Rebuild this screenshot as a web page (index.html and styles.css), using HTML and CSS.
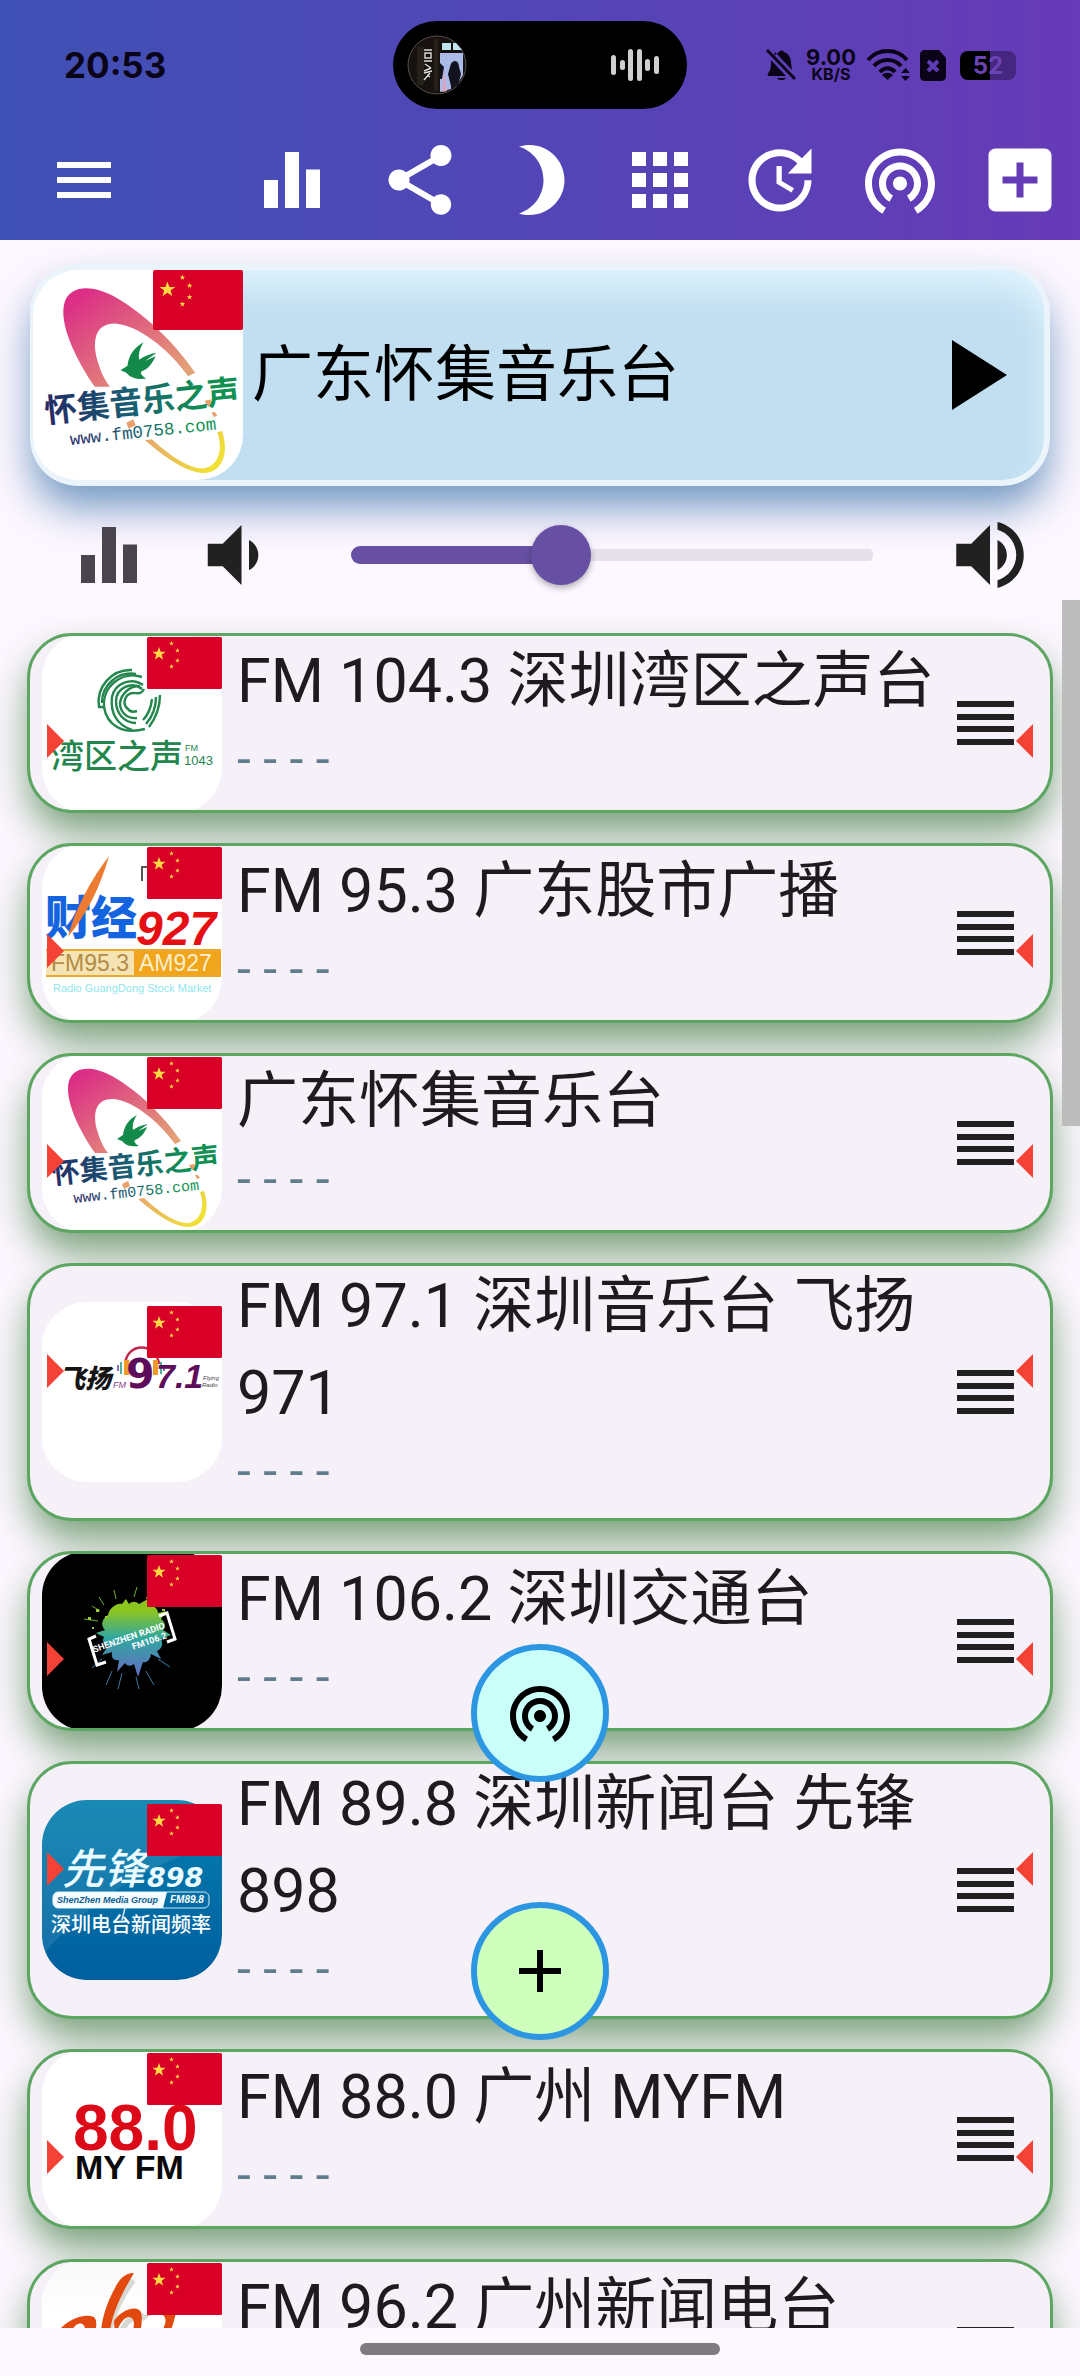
FILE: index.html
```html
<!DOCTYPE html>
<html lang="zh-CN">
<head>
    <meta charset="UTF-8">
    <meta name="viewport" content="width=device-width, initial-scale=1.0">
    <title>广东怀集音乐台</title>
    <link rel="stylesheet" href="styles.css">
</head>
<body>
    <!-- Shared icons and gradients -->
    <svg class="sprite" aria-hidden="true">
        <defs>
            <linearGradient id="pinkFade" x1="0" y1="0" x2="1" y2="1">
                <stop offset="0.1" stop-color="#dc2e86"/>
                <stop offset="0.9" stop-color="#e3a376"/>
            </linearGradient>
            <linearGradient id="yellowFade" x1="0" y1="0" x2="1" y2="0.4">
                <stop offset="0" stop-color="#e5a471"/>
                <stop offset="1" stop-color="#f0df35"/>
            </linearGradient>
            <linearGradient id="navyGreen" x1="0" y1="0" x2="1" y2="0">
                <stop offset="0" stop-color="#232a66"/>
                <stop offset="0.45" stop-color="#185f74"/>
                <stop offset="0.8" stop-color="#119054"/>
            </linearGradient>
            <linearGradient id="splat" x1="0" y1="0" x2="0" y2="1">
                <stop offset="0.15" stop-color="#8cc520"/>
                <stop offset="0.5" stop-color="#30a7a0"/>
                <stop offset="0.9" stop-color="#5b76bd"/>
            </linearGradient>
            <linearGradient id="seaBlue" x1="0" y1="0" x2="0" y2="1">
                <stop offset="0" stop-color="#047fae"/>
                <stop offset="1" stop-color="#005f9f"/>
            </linearGradient>
            <linearGradient id="paper" x1="0" y1="0" x2="0" y2="1">
                <stop offset="0" stop-color="#f8f8f8"/>
                <stop offset="0.3" stop-color="#ffffff"/>
            </linearGradient>
        </defs>
        <symbol id="bars" viewBox="0 0 24 24"><path d="M10 20h4V4h-4v16zm-6 0h4v-8H4v8zM16 9v11h4V9h-4z"/></symbol>
        <symbol id="tether" viewBox="0 0 24 24"><path d="M12 11c-1.1 0-2 .9-2 2s.9 2 2 2 2-.9 2-2-.9-2-2-2zm6 2c0-3.31-2.69-6-6-6s-6 2.69-6 6c0 2.22 1.21 4.15 3 5.19l1-1.74c-1.19-.7-2-1.97-2-3.45 0-2.21 1.79-4 4-4s4 1.79 4 4c0 1.48-.81 2.75-2 3.45l1 1.74c1.79-1.04 3-2.97 3-5.19zM12 3C6.48 3 2 7.48 2 13c0 3.7 2.01 6.92 4.99 8.65l1-1.73C5.61 18.53 4 15.96 4 13c0-4.42 3.58-8 8-8s8 3.58 8 8c0 2.96-1.61 5.53-4 6.92l1 1.73c2.99-1.73 5-4.95 5-8.65 0-5.52-4.48-10-10-10z"/></symbol>
        <symbol id="handle" viewBox="0 0 57 44"><path d="M0 0h57v6H0zM0 13h57v6H0zM0 25h57v6H0zM0 38h57v6H0z"/></symbol>
        <symbol id="star" viewBox="-10 -10 20 20"><path d="M0-10L2.4-3.2 9.5-3.1 3.8 1.2 5.9 8.1 0 4-5.9 8.1-3.8 1.2-9.5-3.1-2.4-3.2z"/></symbol>
        <symbol id="flag" viewBox="0 0 75 52" preserveAspectRatio="none">
            <rect width="75" height="52" rx="1.5" fill="#d80027"/>
            <g fill="#ffda44">
                <use href="#star" x="5" y="10" width="14" height="14"/>
                <use href="#star" x="22" y="4" width="5" height="5"/>
                <use href="#star" x="28" y="11" width="5" height="5"/>
                <use href="#star" x="28" y="21" width="5" height="5"/>
                <use href="#star" x="22" y="27" width="5" height="5"/>
            </g>
        </symbol>
        <symbol id="swallow" viewBox="0 0 180 180">
            <path fill="url(#pinkFade)" d="M53 100C36 76 22 45 27 28C32 12 52 13 70 23C95 37 121 62 139 88L133 91C115 66 90 48 72 46C55 45 50 58 55 77C58 87 61 94 66 100Z"/>
            <path fill="url(#yellowFade)" d="M96 146C112 160 132 174 146 174C161 174 169 159 162 138L158 139C164 156 157 168 147 170C134 171 116 158 102 145Z"/>
            <path fill="#e9a06b" d="M80 131l6-3 2 5-6 3zM147 112l5-1 2 5-4 1zM153 122l3 0 2 3-3 1z"/>
            <path fill="#138a4a" d="M95 62C87 66 82 73 81 82L75 86L80 88C84 93 91 94 97 93C92 90 92 88 93 87C99 85 103 79 105 74L96 78L106 71C100 72 95 74 91 77C90 72 92 66 95 62Z"/>
        </symbol>
    </svg>

    <header class="app-bar">
        <div class="status-bar">
            <time class="clock">20:53</time>
            <div class="island">
                <svg class="album" viewBox="0 0 60 60" aria-hidden="true">
                    <circle cx="30" cy="30" r="29" fill="#17120f" stroke="#55504c"/>
                    <path fill="#26201b" d="M10 12h7v38h-7zM27 4h4v52h-4z"/>
                    <path fill="#bfe3ee" d="M35 8h9v7h-9zM46 8h3l6 7h-9z"/>
                    <path fill="#a9bbe6" d="M33 18h23v22l-6 10V40H44v14l-11 3z"/>
                    <path fill="#d9a7c4" d="M37 34l3 22-5 1z"/>
                    <path fill="#13131f" d="M43 32c1-8 9-8 9 0l2 7-3 12h-7l-3-12zM33 28l4 4-2 12h-2z"/>
                    <path fill="none" stroke="#ddd" stroke-width="1.4" d="M17 15h8M18 18h6v5h-6zM17 26h8M18 29l6 4M24 33l-7 3M17 38l8-2M23 38l-6 7M20 40l3 2"/>
                </svg>
                <svg class="wave" viewBox="0 0 48 32" aria-hidden="true">
                    <g fill="#cfcfcf">
                        <rect x="0" y="6" width="5" height="20" rx="2.5"/>
                        <rect x="9" y="11" width="5" height="10" rx="2.5"/>
                        <rect x="17" y="0" width="5" height="32" rx="2.5"/>
                        <rect x="26" y="0" width="5" height="32" rx="2.5"/>
                        <rect x="34" y="10" width="5" height="12" rx="2.5"/>
                        <rect x="43" y="7" width="5" height="18" rx="2.5"/>
                    </g>
                </svg>
            </div>
            <div class="indicators">
                <svg width="30" height="32" viewBox="0 0 30 32" aria-hidden="true">
                    <path d="M8 7C10 5 12 4 13 3C14 1 17 1 18 3C23 5 25 9 25 14L26 21L9 3zM5 11L20 27H2C1 26 2 24 3 23C5 20 5 16 5 11zM11 29h9c-2 3-7 3-9 0z"/>
                    <path d="M1 1L29 30" stroke="#0b0419" stroke-width="3" fill="none"/>
                </svg>
                <div class="speed">
                    <span class="speed-value">9.00</span>
                    <span class="speed-unit">KB/S</span>
                </div>
                <svg width="44" height="32" viewBox="0 0 44 32" aria-hidden="true">
                    <path fill="none" stroke="#0b0419" stroke-width="4" d="M2 11C12-1 31-1 41 11M8 17C15 9 28 9 35 17M14 23C18 18 25 18 29 23"/>
                    <path d="M16 26C19 23 24 23 27 26L21.5 31zM35 24l4.500-5 4.500 5zM35 27l4.500 5 4.500-5z"/>
                </svg>
                <svg width="26" height="32" viewBox="0 0 26 32" aria-hidden="true">
                    <path d="M5 1h14l7 8v18c0 3-2 5-5 5H5c-3 0-5-2-5-5V6c0-3 2-5 5-5z"/>
                    <path d="M8 12l10 10M18 12L8 22" stroke="#5f3bb5" stroke-width="4" fill="none"/>
                </svg>
                <div class="battery">52</div>
            </div>
        </div>
        <nav class="toolbar">
            <button class="tool tool-menu" aria-label="菜单"><svg class="icon-md" viewBox="0 0 24 24"><path d="M3 18h18v-2H3v2zm0-5h18v-2H3v2zm0-7v2h18V6H3z"/></svg></button>
            <button class="tool tool-first" aria-label="均衡器"><svg class="icon-lg"><use href="#bars"/></svg></button>
            <button class="tool" aria-label="分享"><svg class="icon-lg" viewBox="0 0 24 24"><path d="M18 16.080c-.76 0-1.440.3-1.960.770L8.910 12.700c.05-.230.090-.460.090-.700s-.040-.470-.090-.700l7.050-4.110c.54.5 1.250.81 2.040.81 1.660 0 3-1.340 3-3s-1.340-3-3-3-3 1.340-3 3c0 .24.040.47.090.7L8.040 9.810C7.500 9.310 6.790 9 6 9c-1.660 0-3 1.340-3 3s1.340 3 3 3c.79 0 1.500-.31 2.040-.81l7.120 4.160c-.05.21-.080.43-.080.65 0 1.610 1.310 2.920 2.920 2.920s2.920-1.310 2.920-2.920-1.310-2.920-2.920-2.920z"/></svg></button>
            <button class="tool" aria-label="夜间模式"><svg class="icon-lg" viewBox="0 0 24 24"><path d="M9 2c-1.050 0-2.050.16-3 .46 4.060 1.270 7 5.060 7 9.540 0 4.480-2.940 8.270-7 9.540.95.3 1.950.46 3 .46 5.520 0 10-4.480 10-10S14.520 2 9 2z"/></svg></button>
            <button class="tool" aria-label="网格"><svg class="icon-lg" viewBox="0 0 24 24"><path d="M4 8h4V4H4v4zm6 12h4v-4h-4v4zm-6 0h4v-4H4v4zm0-6h4v-4H4v4zm6 0h4v-4h-4v4zm6-10v4h4V4h-4zm-6 4h4V4h-4v4zm6 6h4v-4h-4v4zm0 6h4v-4h-4v4z"/></svg></button>
            <button class="tool" aria-label="定时"><svg class="icon-lg" viewBox="0 0 24 24"><path d="M21 10.120h-6.780l2.740-2.820c-2.730-2.700-7.150-2.800-9.880-.1-2.730 2.710-2.730 7.080 0 9.790s7.150 2.710 9.880 0C18.320 15.650 19 14.080 19 12.100h2c0 1.980-.88 4.550-2.640 6.290-3.510 3.480-9.210 3.480-12.720 0-3.500-3.470-3.530-9.110-.02-12.580s9.140-3.470 12.650 0L21 3v7.120zM12.500 8v4.250l3.500 2.080-.72 1.210L11 13V8h1.500z"/></svg></button>
            <button class="tool" aria-label="电台"><svg class="icon-lg"><use href="#tether"/></svg></button>
            <button class="tool" aria-label="添加"><svg class="icon-lg" viewBox="0 0 24 24"><path d="M19 3H5c-1.110 0-2 .9-2 2v14c0 1.100.89 2 2 2h14c1.100 0 2-.9 2-2V5c0-1.100-.9-2-2-2zm-2 10h-4v4h-2v-4H7v-2h4V7h2v4h4v2z"/></svg></button>
        </nav>
    </header>

    <!-- Now playing -->
    <section class="player">
        <div class="now-playing">
            <div class="logo logo-large">
                <svg class="logo-art" viewBox="0 0 180 180">
                    <use href="#swallow"/>
                    <g fill="url(#navyGreen)" transform="rotate(-6 11 131)">
                        <text class="logo-cjk" x="11" y="131" font-size="28">怀集音乐之声</text>
                        <text class="logo-mono" x="30" y="152" font-size="15">www.fm0758.com</text>
                    </g>
                </svg>
                <svg class="flag"><use href="#flag"/></svg>
            </div>
            <h1 class="now-title">广东怀集音乐台</h1>
            <button class="play" aria-label="播放"><svg viewBox="0 0 24 24"><path d="M8 5v14l11-7z"/></svg></button>
        </div>
        <div class="volume">
            <button class="eq" aria-label="均衡器"><svg class="icon-lg"><use href="#bars"/></svg></button>
            <button class="quieter" aria-label="减小音量"><svg class="icon-xl" viewBox="0 0 24 24"><path d="M18.500 12c0-1.770-1.020-3.290-2.500-4.030v8.050c1.480-.73 2.500-2.250 2.500-4.020zM5 9v6h4l5 5V4L9 9H5z"/></svg></button>
            <input class="slider" type="range" min="0" max="100" value="39" aria-label="音量">
            <button class="louder" aria-label="增大音量"><svg class="icon-xl" viewBox="0 0 24 24"><path d="M3 9v6h4l5 5V4L7 9H3zm13.500 3c0-1.770-1.020-3.290-2.500-4.030v8.050c1.480-.73 2.500-2.250 2.500-4.020zM14 3.230v2.060c2.890.86 5 3.540 5 6.710s-2.110 5.850-5 6.710v2.060c4.010-.91 7-4.490 7-8.770s-2.990-7.860-7-8.770z"/></svg></button>
        </div>
    </section>

    <main class="stations">
        <ul class="station-list">
            <li class="station">
                <div class="logo">
                    <svg class="logo-art" viewBox="0 0 180 180">
                        <g fill="none" stroke="#23874d" stroke-width="2.4">
                            <path d="M90 37A32 32 0 0 0 57 74L62 74A29 29 0 0 1 100 44"/>
                            <path d="M94 41A29 29 0 0 0 60 70"/>
                            <path d="M101 52A20 20 0 0 0 70 64C68 82 76 92 90 97"/>
                            <path d="M100 56A16 16 0 0 0 74 68C74 80 82 90 94 90"/>
                            <path d="M102 56C99 62 96 60 92 60A9 9 0 0 0 86 76C88 79 92 79 95 78"/>
                            <path d="M98 53A20 20 0 0 0 78 70C78 80 86 86 95 85"/>
                            <path d="M62 74C65 92 80 102 103 96"/>
                            <path d="M110 66C109 75 106 82 101 87M114 64C114 75 110 84 104 91M118 62C118 76 113 86 107 94"/>
                        </g>
                        <g fill="#23874d">
                            <text class="logo-cjk logo-light" x="9" y="135" font-size="33">湾区之声</text>
                            <text class="logo-latin" x="143" y="118" font-size="9">FM</text>
                            <text class="logo-latin" x="142" y="132" font-size="13">1043</text>
                        </g>
                    </svg>
                    <svg class="flag"><use href="#flag"/></svg>
                </div>
                <div class="station-text">
                    <h2>FM 104.3 深圳湾区之声台</h2>
                    <p>- - - -</p>
                </div>
                <button class="drag" aria-label="排序"><svg><use href="#handle"/></svg></button>
            </li>
            <li class="station">
                <div class="logo">
                    <svg class="logo-art" viewBox="0 0 180 180">
                        <path fill="none" stroke="#555" stroke-width="2" d="M100 38V24h6"/>
                        <text class="logo-cjk logo-heavy" x="3" y="91" font-size="46" fill="#1464e0">财经</text>
                        <text class="logo-latin logo-bold logo-oblique" x="94" y="102" font-size="48" fill="#e60f14">927</text>
                        <path fill="#ee7b32" d="M67 13C58 45 44 72 26 94C33 66 48 38 67 13Z"/>
                        <path fill="#f5e3b4" d="M4 106h89v28H4z"/>
                        <path fill="#f0a51c" d="M92 106h87v28H92z"/>
                        <path fill="none" stroke="#eda92c" stroke-width="2" d="M4 107h175M4 133h175"/>
                        <text class="logo-latin" x="9" y="128" font-size="23" fill="#b28c45">FM95.3</text>
                        <text class="logo-latin" x="97" y="128" font-size="23" fill="#fbeecb">AM927</text>
                        <text class="logo-latin" x="11" y="149" font-size="11" fill="#8fe6ee">Radio GuangDong Stock Market</text>
                    </svg>
                    <svg class="flag"><use href="#flag"/></svg>
                </div>
                <div class="station-text">
                    <h2>FM 95.3 广东股市广播</h2>
                    <p>- - - -</p>
                </div>
                <button class="drag" aria-label="排序"><svg><use href="#handle"/></svg></button>
            </li>
            <li class="station">
                <div class="logo">
                    <svg class="logo-art" viewBox="0 0 180 180">
                        <use href="#swallow"/>
                        <g fill="url(#navyGreen)" transform="rotate(-6 11 131)">
                            <text class="logo-cjk" x="11" y="131" font-size="28">怀集音乐之声</text>
                            <text class="logo-mono" x="30" y="152" font-size="15">www.fm0758.com</text>
                        </g>
                    </svg>
                    <svg class="flag"><use href="#flag"/></svg>
                </div>
                <div class="station-text">
                    <h2>广东怀集音乐台</h2>
                    <p>- - - -</p>
                </div>
                <button class="drag" aria-label="排序"><svg><use href="#handle"/></svg></button>
            </li>
            <li class="station">
                <div class="logo">
                    <svg class="logo-art" viewBox="0 0 180 180">
                        <text class="logo-cjk logo-heavy logo-oblique" x="17" y="86" font-size="26" fill="#151515">飞扬</text>
                        <path fill="none" stroke="#c22750" stroke-width="2.5" d="M83 62C85 40 114 40 117 62"/>
                        <path fill="#f09a2c" d="M82 58h5v15h-5zM111 58h5v15h-5z"/>
                        <path fill="#4fae9c" d="M78 60h2v12h-2zM118 60h2v12h-2z"/>
                        <path fill="#8b6fc0" d="M75 63h2v6h-2zM121 63h2v6h-2z"/>
                        <text class="logo-latin logo-oblique" x="71" y="86" font-size="9" fill="#8e3b8a">FM</text>
                        <text class="logo-dejavu" x="84" y="86" font-size="41" fill="#5e0d5a">9</text>
                        <text class="logo-latin logo-bold logo-oblique" x="114" y="86" font-size="34" fill="#5e0d5a">7.1</text>
                        <text class="logo-latin logo-oblique" x="161" y="78" font-size="6" fill="#444">Flying</text>
                        <text class="logo-latin logo-oblique" x="160" y="85" font-size="6" fill="#444">Radio</text>
                    </svg>
                    <svg class="flag"><use href="#flag"/></svg>
                </div>
                <div class="station-text">
                    <h2>FM 97.1 深圳音乐台 飞扬 971</h2>
                    <p>- - - -</p>
                </div>
                <button class="drag" aria-label="排序"><svg><use href="#handle"/></svg></button>
            </li>
            <li class="station">
                <div class="logo">
                    <svg class="logo-art logo-black" viewBox="0 0 180 180">
                        <path fill="url(#splat)" d="M66 64C68 56 75 52 80 53L84 48L87 53C90 50 94 50 97 53L106 48L105 55C112 54 116 58 116 62L124 60L119 68C124 72 124 76 121 79L129 84L119 88C122 94 119 98 115 100L119 108L109 103C108 110 104 112 101 111L96 126L92 113C88 116 85 115 83 112L75 121L77 109C72 110 69 107 70 101L60 104L66 95C61 93 60 90 62 86L54 82L63 79C58 74 60 68 66 64Z"/>
                        <path fill="none" stroke="#6fae35" stroke-width="1" d="M58 60l-8-5M56 70l-14-2M62 54l-5-8M74 48l-2-9M92 46l3-10M104 48l5-10"/>
                        <path fill="none" stroke="#3a7da5" stroke-width="1" d="M70 120l-6 14M80 122l-4 16M94 126l3 12M104 120l8 14M116 108l12 8M60 108l-10 9"/>
                        <path fill="#9ccb30" d="M46 66h3v3h-3zM54 58h3v3h-3zM63 65h3v2h-3zM120 58h3v2h-3zM50 76h2v2h-2z"/>
                        <path fill="none" stroke="#fff" stroke-width="3" d="M54 85L47 88L55 114L64 111M117 65L125 62L133 88L125 91"/>
                        <g transform="rotate(-19 54 101)" fill="#fff">
                            <text class="logo-roboto" x="52" y="101" font-size="9">SHENZHEN RADIO</text>
                            <text class="logo-roboto" x="90" y="111" font-size="9">FM106.2</text>
                        </g>
                    </svg>
                    <svg class="flag"><use href="#flag"/></svg>
                </div>
                <div class="station-text">
                    <h2>FM 106.2 深圳交通台</h2>
                    <p>- - - -</p>
                </div>
                <button class="drag" aria-label="排序"><svg><use href="#handle"/></svg></button>
            </li>
            <li class="station">
                <div class="logo">
                    <svg class="logo-art" viewBox="0 0 180 180">
                        <rect width="180" height="180" fill="url(#seaBlue)"/>
                        <path fill="#fff" opacity="0.09" d="M0 0H180V40C120 60 50 95 0 156Z"/>
                        <text class="logo-cjk logo-light logo-oblique" x="20" y="84" font-size="42" fill="#e9fbff">先锋</text>
                        <text class="logo-dejavu logo-oblique" x="105" y="87" font-size="27" fill="#e9fbff">898</text>
                        <rect x="11" y="92" width="156" height="16" rx="5" fill="none" stroke="#cfeaf6"/>
                        <path fill="#f4fcff" d="M16 92h109l-4 16H16c-7 0-7-16 0-16z"/>
                        <path fill="none" stroke="#cfeaf6" stroke-width="1.5" d="M83 108l-3 12"/>
                        <text class="logo-latin logo-bold logo-oblique" x="15" y="103" font-size="9" fill="#0c5c93">ShenZhen Media Group</text>
                        <text class="logo-latin logo-bold logo-oblique" x="128" y="103" font-size="10" fill="#fff">FM89.8</text>
                        <text class="logo-cjk logo-light" x="9" y="132" font-size="20" fill="#fff">深圳电台新闻频率</text>
                    </svg>
                    <svg class="flag"><use href="#flag"/></svg>
                </div>
                <div class="station-text">
                    <h2>FM 89.8 深圳新闻台 先锋 898</h2>
                    <p>- - - -</p>
                </div>
                <button class="drag" aria-label="排序"><svg><use href="#handle"/></svg></button>
            </li>
            <li class="station">
                <div class="logo">
                    <svg class="logo-art" viewBox="0 0 180 180">
                        <text class="logo-latin logo-bold" x="31" y="101" font-size="64" fill="#dc0a18">88.0</text>
                        <text class="logo-latin logo-bold" x="33" y="130" font-size="34" fill="#0a0a0a">MY FM</text>
                    </svg>
                    <svg class="flag"><use href="#flag"/></svg>
                </div>
                <div class="station-text">
                    <h2>FM 88.0 广州 MYFM</h2>
                    <p>- - - -</p>
                </div>
                <button class="drag" aria-label="排序"><svg><use href="#handle"/></svg></button>
            </li>
            <li class="station">
                <div class="logo">
                    <svg class="logo-art" viewBox="0 0 180 180">
                        <rect width="180" height="180" fill="url(#paper)"/>
                        <path fill="none" stroke="#d9d9d4" stroke-width="6" d="M91 21C80 36 70 54 66 78M78 76C84 60 96 52 104 60"/>
                        <g fill="#e2490f">
                            <path d="M92 14C82 14 77 21 73 29C65 44 60 57 58 80H67C69 55 79 36 92 14Z"/>
                            <path d="M18 70C27 60 42 54 52 58C56 62 54 70 52 78H41C46 66 40 62 34 66C30 70 28 74 27 80H14Z"/>
                            <path d="M72 62C78 52 94 45 99 53C101 61 99 72 96 80H88C94 66 93 58 86 58C80 60 76 68 73 78Z"/>
                            <path d="M104 57C112 47 128 49 134 53C132 63 130 72 122 82H113C122 70 126 62 122 57C116 53 110 56 104 57Z"/>
                        </g>
                    </svg>
                    <svg class="flag"><use href="#flag"/></svg>
                </div>
                <div class="station-text">
                    <h2>FM 96.2 广州新闻电台</h2>
                    <p>- - - -</p>
                </div>
                <button class="drag" aria-label="排序"><svg><use href="#handle"/></svg></button>
            </li>
        </ul>
        <div class="scroll-thumb"></div>
    </main>

    <!-- Floating buttons -->
    <div class="fabs">
        <button class="fab fab-radio" aria-label="电台"><svg class="icon-md"><use href="#tether"/></svg></button>
        <button class="fab fab-add" aria-label="添加电台"><svg class="icon-md" viewBox="0 0 24 24"><path d="M19 13h-6v6h-2v-6H5v-2h6V5h2v6h6v2z"/></svg></button>
    </div>

    <footer class="nav-bar"><div class="nav-pill"></div></footer>
</body>
</html>
```

FILE: styles.css
```css
* {
    box-sizing: border-box;
}

body {
    margin: 0;
    height: 100vh;
    display: flex;
    flex-direction: column;
    position: relative;
    overflow: hidden;
    background: #fdf7ff;
    color: #1d1b20;
    font-family: Roboto, "Noto Sans CJK SC", sans-serif;
}

button {
    padding: 0;
    border: 0;
    background: none;
    color: inherit;
    cursor: pointer;
    display: flex;
    align-items: center;
    justify-content: center;
}

svg {
    display: block;
    fill: currentColor;
}

.sprite {
    position: absolute;
    width: 0;
    height: 0;
}

.icon-md {
    width: 72px;
    height: 72px;
}

.icon-lg {
    width: 84px;
    height: 84px;
}

.icon-xl {
    width: 90px;
    height: 90px;
}

/* Header */
.app-bar {
    background: linear-gradient(90deg, #3f51b5, #673ab7);
    color: #fff;
}

.status-bar {
    height: 120px;
    padding: 10px 64px 0;
    display: grid;
    grid-template-columns: 1fr auto 1fr;
    align-items: center;
    color: #0b0419;
    font-family: Inter, sans-serif;
}

.clock {
    font-size: 35px;
    font-weight: 700;
    line-height: 40px;
}

.island {
    width: 294px;
    height: 88px;
    padding: 0 28px 0 14px;
    border-radius: 44px;
    background: #000;
    display: flex;
    align-items: center;
    justify-content: space-between;
}

.album {
    width: 60px;
    height: 60px;
}

.wave {
    width: 48px;
    height: 32px;
}

.indicators {
    display: flex;
    justify-content: flex-end;
    align-items: center;
    gap: 10px;
}

.speed {
    display: flex;
    flex-direction: column;
    align-items: center;
    font-weight: 700;
}

.speed-value {
    font-size: 22px;
    line-height: 18px;
}

.speed-unit {
    font-size: 16px;
    line-height: 16px;
}

.battery {
    width: 56px;
    height: 29px;
    margin-left: 4px;
    border-radius: 8px;
    background: linear-gradient(90deg, #000 54%, #46277f 54%);
    color: #6a44b4;
    font-size: 24px;
    font-weight: 700;
    line-height: 29px;
    text-align: center;
}

.toolbar {
    height: 120px;
    padding-left: 24px;
    display: flex;
}

.tool {
    width: 120px;
}

.tool-first {
    width: 136px;
}

.tool-menu {
    margin-right: auto;
}

/* Now playing */
.player {
    padding: 24px 30px 0;
}

.now-playing {
    display: flex;
    align-items: center;
    gap: 9px;
    padding-right: 12px;
    border: 6px solid rgba(255, 255, 255, 0.65);
    border-radius: 48px;
    background: #c2dff1;
    box-shadow: 0 24px 42px -3px rgba(35, 100, 160, 0.65), inset -6px 27px 30px -9px #dff3fe;
    color: #000;
}

.logo {
    position: relative;
    flex: none;
    width: 180px;
    height: 180px;
}

.logo-large {
    width: 210px;
    height: 210px;
    margin-left: -3px;
}

.logo-art {
    width: 100%;
    height: 100%;
    border-radius: 45px;
    background: #fff;
}

.logo-black {
    background: #000;
}

.flag {
    position: absolute;
    top: 4px;
    right: 0;
    width: 75px;
    height: 52px;
}

.logo-large .flag {
    top: 0;
    width: 90px;
    height: 60px;
}

.now-title {
    flex: 1;
    margin: 0;
    font-size: 61px;
    font-weight: 400;
    line-height: 87px;
}

.play svg {
    width: 120px;
    height: 120px;
}

/* Volume row */
.volume {
    height: 114px;
    padding: 24px 15px 0 37px;
    display: flex;
    align-items: center;
    color: #212121;
}

.eq {
    margin-right: 38px;
    color: #49454f;
}

.slider {
    flex: 1;
    min-width: 0;
    height: 60px;
    margin: 0 72px;
    appearance: none;
    background: none;
}

.slider::-webkit-slider-runnable-track {
    height: 18px;
    border-radius: 9px;
    background:
        linear-gradient(#6750a4, #6750a4) left / 40% 18px no-repeat,
        linear-gradient(#e6e0e9, #e6e0e9) center / 100% 12px no-repeat;
}

.slider::-webkit-slider-thumb {
    appearance: none;
    width: 60px;
    height: 60px;
    margin-top: -21px;
    border-radius: 50%;
    background: #6750a4;
    box-shadow: 0 3px 6px rgba(0, 0, 0, 0.3);
}

/* Station list */
.stations {
    flex: 1;
    min-height: 0;
    position: relative;
    overflow: hidden;
}

.station-list {
    list-style: none;
    margin: 0;
    padding: 33px 27px;
    display: flex;
    flex-direction: column;
    gap: 30px;
}

.station {
    position: relative;
    min-height: 180px;
    padding: 0 36px 0 12px;
    display: flex;
    align-items: center;
    gap: 15px;
    overflow: hidden;
    border: 3px solid #5ca661;
    border-radius: 45px;
    background: #f6f1f9;
    box-shadow: 0 21px 39px -3px rgba(25, 100, 25, 0.6);
}

/* logo runs under the card border */
.station .logo {
    margin: -3px 0;
}

/* Swipe markers on both edges */
.station::before,
.station::after {
    content: "";
    position: absolute;
    z-index: 1;
    top: 88px;
    border: 17px solid transparent;
}

.station::before {
    left: 17px;
    border-left-color: #f44336;
    border-right-width: 0;
}

.station::after {
    right: 17px;
    border-right-color: #f44336;
    border-left-width: 0;
}

.station-text {
    flex: 1;
    min-width: 0;
    margin: -3px 0 3px;
}

.station-text h2 {
    margin: 0;
    font-size: 61px;
    font-weight: 400;
    line-height: 87px;
}

.station-text p {
    margin: 0;
    padding-bottom: 10px;
    color: #607d8b;
    font-size: 50px;
    line-height: 68px;
}

.drag {
    color: #212121;
}

.drag svg {
    width: 57px;
    height: 44px;
}

.scroll-thumb {
    position: absolute;
    top: 0;
    right: 0;
    width: 18px;
    height: 526px;
    background: #bcbcbc;
}

/* Floating buttons */
.fabs {
    position: absolute;
    left: 0;
    right: 0;
    bottom: 336px;
    display: flex;
    flex-direction: column;
    align-items: center;
    gap: 120px;
    pointer-events: none;
}

.fab {
    width: 138px;
    height: 138px;
    border: 6px solid #2d96e2;
    border-radius: 50%;
    color: #000;
    pointer-events: auto;
}

.fab-radio {
    background: #c9fff8;
}

.fab-add {
    background: #cfffbd;
}

.nav-bar {
    height: 48px;
    padding-top: 15px;
}

.nav-pill {
    width: 360px;
    height: 12px;
    margin: 0 auto;
    border-radius: 6px;
    background: #7f7a80;
}

/* Lettering inside the station logos */
.logo-cjk {
    font-family: "Noto Sans CJK SC", sans-serif;
    font-weight: 700;
}

.logo-latin {
    font-family: "Liberation Sans", sans-serif;
}

.logo-roboto {
    font-family: Roboto, sans-serif;
    font-weight: 700;
}

.logo-dejavu {
    font-family: "DejaVu Sans", sans-serif;
    font-weight: 700;
}

.logo-mono {
    font-family: "Liberation Mono", monospace;
    font-weight: 400;
}

.logo-bold {
    font-weight: 700;
}

.logo-heavy {
    font-weight: 900;
}

.logo-light {
    font-weight: 500;
}

.logo-oblique {
    font-style: italic;
}
```
